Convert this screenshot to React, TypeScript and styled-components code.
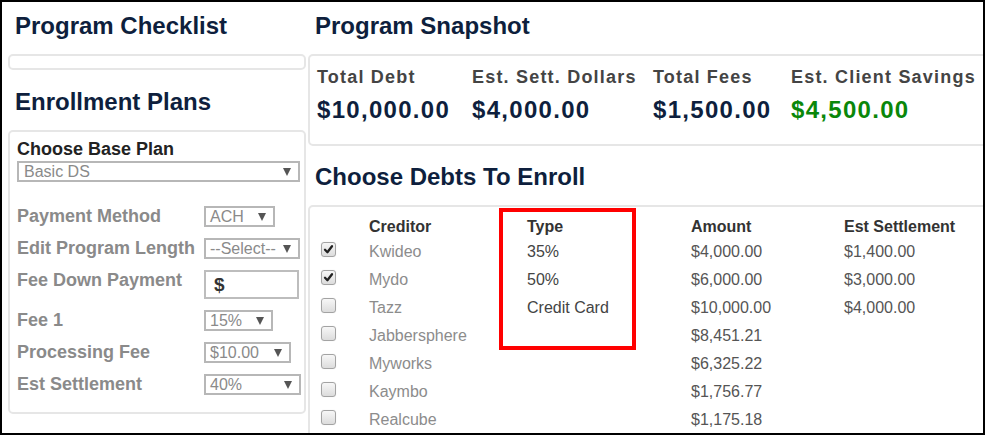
import { Fragment } from 'react';
import styled, { createGlobalStyle } from 'styled-components';

const GlobalStyle = createGlobalStyle`
  body {
    margin: 0;
    background: #fff;
    font-family: "Liberation Sans", Arial, sans-serif;
  }
`;

const Frame = styled.div`
  width: 985px;
  height: 435px;
  box-sizing: border-box;
  border: 2px solid #000;
  display: grid;
  grid-template-columns: 306px 1fr;
  overflow: hidden;
  background: #fff;
`;

const LeftColumn = styled.div`
  padding: 0 2px 0 6px;
`;

const RightColumn = styled.div`
  overflow: hidden;
`;

const Heading = styled.h2<{ $top: number }>`
  margin: ${(p) => p.$top}px 0 14px 7px;
  font-size: 24px;
  line-height: 28px;
  font-weight: 700;
  color: #0e1f3d;
  white-space: nowrap;
`;

const Panel = styled.div`
  box-sizing: border-box;
  border: 2px solid #e6e6e6;
  border-radius: 5px;
`;

const ChecklistPanel = styled(Panel)`
  height: 16px;
`;

const EnrollPanel = styled(Panel)`
  height: 284px;
  padding: 6px 8px 16px 7px;
`;

const PlanLabel = styled.div`
  font-size: 18px;
  line-height: 22px;
  font-weight: 700;
  color: #222;
`;

const Select = styled.div<{ $w: number }>`
  width: ${(p) => p.$w}px;
  height: 21px;
  box-sizing: border-box;
  border: 2px solid #b7b7b7;
  padding: 0 7px 0 4px;
  display: flex;
  align-items: center;
  justify-content: space-between;
  font-size: 16px;
  color: #8a8a8a;
  white-space: nowrap;
  background: #fff;
`;

const Caret = styled.span`
  width: 0;
  height: 0;
  border-left: 4px solid transparent;
  border-right: 4px solid transparent;
  border-top: 8px solid #555;
  margin-left: 4px;
  flex-shrink: 0;
`;

const BasePlan = styled(Select)`
  margin-top: 1px;
  padding-left: 5px;
`;

const FormGrid = styled.div`
  margin-top: 24px;
  display: grid;
  grid-template-columns: 187px auto;
  row-gap: 11px;
  align-items: start;
`;

const FieldLabel = styled.div`
  font-size: 18px;
  line-height: 21px;
  font-weight: 700;
  color: #8a8a8a;
  white-space: nowrap;
`;

const MoneyInput = styled.div`
  width: 95px;
  height: 29px;
  box-sizing: border-box;
  border: 2px solid #bdbdbd;
  padding-left: 8px;
  display: flex;
  align-items: center;
  font-size: 19px;
  font-weight: 700;
  color: #333;
`;

const SnapshotPanel = styled(Panel)`
  width: calc(100% + 20px);
  height: 92px;
  padding: 10px 7px;
  display: flex;
`;

const Stat = styled.div<{ $w?: number }>`
  width: ${(p) => (p.$w ? `${p.$w}px` : 'auto')};
  flex-shrink: 0;
  display: flex;
  flex-direction: column;
  gap: 7px;
  white-space: nowrap;
`;

const StatLabel = styled.div`
  font-size: 18px;
  line-height: 22px;
  font-weight: 700;
  letter-spacing: 1.2px;
  color: #444;
`;

const StatValue = styled.div<{ $green?: boolean }>`
  font-size: 24px;
  line-height: 30px;
  font-weight: 700;
  letter-spacing: 1.3px;
  color: ${(p) => (p.$green ? '#0a870a' : '#0e1f3d')};
`;

const TablePanel = styled(Panel)`
  position: relative;
  width: calc(100% + 20px);
  height: 260px;
  padding: 9px 12px;
`;

const TableGrid = styled.div`
  display: grid;
  grid-template-columns: 47px 158px 164px 153px 1fr;
  grid-auto-rows: 28px;
  grid-template-rows: 22px;
  font-size: 16px;
  line-height: 28px;
  white-space: nowrap;
`;

const HeadCell = styled.div`
  font-weight: 700;
  line-height: 22px;
  color: #333;
`;

const Cell = styled.div<{ $tone: 'name' | 'type' | 'money' }>`
  color: ${(p) => (p.$tone === 'name' ? '#8c8c8c' : p.$tone === 'type' ? '#444' : '#555')};
`;

const CheckBox = styled.span`
  display: block;
  margin: 4px 0 0 -1px;
  width: 15px;
  height: 15px;
  box-sizing: border-box;
  border: 1px solid #a3a3a3;
  border-radius: 3px;
  background: linear-gradient(#f7f7f7, #dcdcdc);
  box-shadow: 0 0 1px rgba(0, 0, 0, 0.15);

  svg {
    display: block;
  }
`;

const Highlight = styled.div`
  position: absolute;
  left: 189px;
  top: 1px;
  width: 137px;
  height: 142px;
  box-sizing: border-box;
  border: 4px solid #ff0000;
  pointer-events: none;
`;

const debts = [
  { name: 'Kwideo', type: '35%', amount: '$4,000.00', sett: '$1,400.00', checked: true },
  { name: 'Mydo', type: '50%', amount: '$6,000.00', sett: '$3,000.00', checked: true },
  { name: 'Tazz', type: 'Credit Card', amount: '$10,000.00', sett: '$4,000.00', checked: false },
  { name: 'Jabbersphere', type: '', amount: '$8,451.21', sett: '', checked: false },
  { name: 'Myworks', type: '', amount: '$6,325.22', sett: '', checked: false },
  { name: 'Kaymbo', type: '', amount: '$1,756.77', sett: '', checked: false },
  { name: 'Realcube', type: '', amount: '$1,175.18', sett: '', checked: false },
];

const Check = ({ on }: { on: boolean }) => (
  <CheckBox>
    {on && (
      <svg width="13" height="13" viewBox="0 0 13 13">
        <path d="M3 6.8 L5.4 9.2 L10 3.2" fill="none" stroke="#222" strokeWidth="2.3" strokeLinecap="round" strokeLinejoin="round" />
      </svg>
    )}
  </CheckBox>
);

const fields = [
  { label: 'Payment Method', value: 'ACH', w: 71 },
  { label: 'Edit Program Length', value: '--Select--', w: 96 },
  { label: 'Fee Down Payment', value: null, w: 95 },
  { label: 'Fee 1', value: '15%', w: 69 },
  { label: 'Processing Fee', value: '$10.00', w: 87 },
  { label: 'Est Settlement', value: '40%', w: 97 },
];

export default function App() {
  return (
    <>
      <GlobalStyle />
      <Frame>
        <LeftColumn>
          <Heading $top={10}>Program Checklist</Heading>
          <ChecklistPanel />
          <Heading $top={18}>Enrollment Plans</Heading>
          <EnrollPanel>
            <PlanLabel>Choose Base Plan</PlanLabel>
            <BasePlan $w={283}>
              Basic DS
              <Caret />
            </BasePlan>
            <FormGrid>
              {fields.map((f) => (
                <Fragment key={f.label}>
                  <FieldLabel>{f.label}</FieldLabel>
                  {f.value === null ? (
                    <MoneyInput>$</MoneyInput>
                  ) : (
                    <Select $w={f.w}>
                      {f.value}
                      <Caret />
                    </Select>
                  )}
                </Fragment>
              ))}
            </FormGrid>
          </EnrollPanel>
        </LeftColumn>

        <RightColumn>
          <Heading $top={10}>Program Snapshot</Heading>
          <SnapshotPanel>
            <Stat $w={155}>
              <StatLabel>Total Debt</StatLabel>
              <StatValue>$10,000.00</StatValue>
            </Stat>
            <Stat $w={181}>
              <StatLabel>Est. Sett. Dollars</StatLabel>
              <StatValue>$4,000.00</StatValue>
            </Stat>
            <Stat $w={138}>
              <StatLabel>Total Fees</StatLabel>
              <StatValue>$1,500.00</StatValue>
            </Stat>
            <Stat>
              <StatLabel>Est. Client Savings</StatLabel>
              <StatValue $green>$4,500.00</StatValue>
            </Stat>
          </SnapshotPanel>

          <Heading $top={17}>Choose Debts To Enroll</Heading>
          <TablePanel>
            <TableGrid>
              <HeadCell />
              <HeadCell>Creditor</HeadCell>
              <HeadCell>Type</HeadCell>
              <HeadCell>Amount</HeadCell>
              <HeadCell>Est Settlement</HeadCell>
              {debts.map((d) => (
                <Fragment key={d.name}>
                  <Check on={d.checked} />
                  <Cell $tone="name">{d.name}</Cell>
                  <Cell $tone="type">{d.type}</Cell>
                  <Cell $tone="money">{d.amount}</Cell>
                  <Cell $tone="money">{d.sett}</Cell>
                </Fragment>
              ))}
            </TableGrid>
            <Highlight />
          </TablePanel>
        </RightColumn>
      </Frame>
    </>
  );
}
